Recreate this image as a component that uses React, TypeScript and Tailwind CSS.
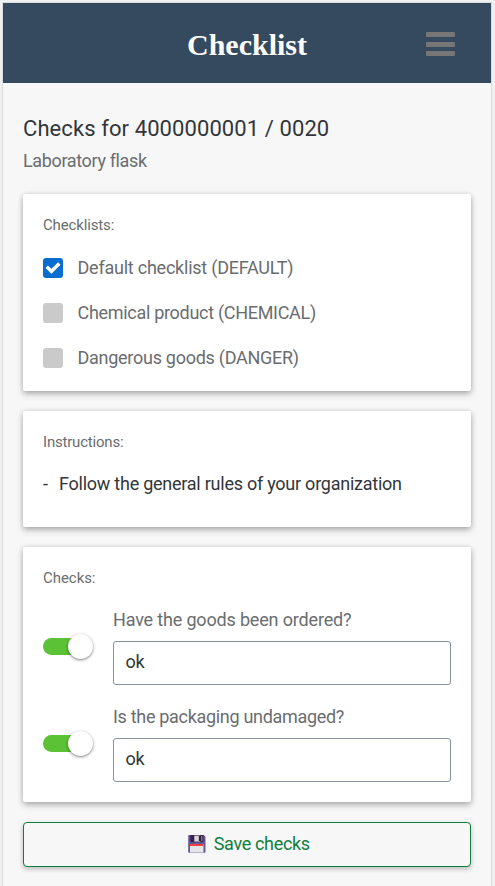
import { useState } from "react";

const card = "rounded-[2px] bg-white px-5 shadow-[0_3px_6px_rgba(0,0,0,0.28),0_0_5px_rgba(0,0,0,0.1)]";

function CheckRow({ label, tracking, initial = false }: { label: string; tracking: string; initial?: boolean }) {
  const [on, setOn] = useState(initial);
  return (
    <button type="button" role="checkbox" aria-checked={on} onClick={() => setOn(!on)} className="flex h-[45px] items-center">
      <span className={`flex size-5 shrink-0 items-center justify-center rounded-[3px] ${on ? "bg-[#0a6ed1]" : "bg-[#cacaca]"}`}>
        {on && (
          <svg width="20" height="20" viewBox="0 0 20 20" fill="none" stroke="white" strokeWidth="3.4">
            <path d="M3.7 8.8 8.4 13.3 16.3 5.5" />
          </svg>
        )}
      </span>
      <span className={`ml-[14.5px] whitespace-nowrap text-[18px] leading-6 text-[#6a6d70] ${tracking}`}>{label}</span>
    </button>
  );
}

function Toggle() {
  const [on, setOn] = useState(true);
  return (
    <button type="button" role="switch" aria-checked={on} onClick={() => setOn(!on)} className="relative mt-[26px] h-[25px] w-[50px] shrink-0">
      <span className={`absolute left-0 top-1 h-[17px] w-[46px] rounded-full ${on ? "bg-[#5bc236]" : "bg-[#cacaca]"}`} />
      <span className={`absolute top-0 size-[25px] rounded-full bg-white shadow-[0_1px_3px_rgba(0,0,0,0.5)] ${on ? "left-[25px]" : "left-0"}`} />
    </button>
  );
}

function Question({ label, tracking }: { label: string; tracking: string }) {
  return (
    <div className="flex h-[97px] gap-5">
      <Toggle />
      <label className="block flex-1">
        <span className={`mb-[9px] block whitespace-nowrap text-[18px] leading-6 text-[#6a6d70] ${tracking}`}>{label}</span>
        <input
          defaultValue="ok"
          className="block h-11 w-full rounded-[3px] border border-[#89919a] bg-white px-[11.5px] pb-1 text-[18px] tracking-[-0.3px] text-[#32363a] outline-none"
        />
      </label>
    </div>
  );
}

function Floppy() {
  return (
    <svg width="18" height="18" viewBox="0 0 18 18" className="shrink-0">
      <path d="M1 0h14.8L17.5 1.7V17a.8.8 0 0 1-.8.8H1a.8.8 0 0 1-.8-.8V.8A.8.8 0 0 1 1 0Z" fill="#65569b" />
      <path d="M2.3 0h13v6.3a1 1 0 0 1-1 1h-11a1 1 0 0 1-1-1Z" fill="#352248" />
      <path d="M6.3.6h6v6h-6Z" fill="#d9d6dc" />
      <path d="M10.8 1h2.6v5h-2.6Z" fill="#302039" />
      <path d="M13.4 1h.8v5h-.8Z" fill="#bdb6c5" />
      <path d="M2 9h13.5v8.5H2Z" fill="#e5e5e5" />
      <path d="M2 9h13.5v2H2Z" fill="#f8403a" />
    </svg>
  );
}

export default function App() {
  return (
    <div className="h-[886px] w-[495px] overflow-hidden bg-[#f0f0f0] pl-[2px] pt-[2px] font-['Roboto','Liberation_Sans',sans-serif]">
      <div className="h-[884px] w-[490px] border border-b-0 border-[#dcdcdc] bg-[#f7f7f7]">
        <header className="grid h-20 grid-cols-[1fr_auto_1fr] items-center bg-[#354a5f] pr-9">
          <span />
          <h1 className="ml-9 pt-[3px] font-['Liberation_Serif',serif] text-[30px] font-bold leading-8 text-white">Checklist</h1>
          <button type="button" aria-label="Menu" className="mt-[2px] flex w-[29px] flex-col gap-[4.5px] justify-self-end">
            <span className="h-[5px] rounded-[1px] bg-[#777]" />
            <span className="h-[5px] rounded-[1px] bg-[#777]" />
            <span className="h-[5px] rounded-[1px] bg-[#777]" />
          </button>
        </header>
        <main className="px-5 pt-8">
          <h2 className="whitespace-nowrap text-[22px] leading-7 tracking-[0.09px] text-[#32363a]">Checks for 4000000001 / 0020</h2>
          <p className="mt-[6px] whitespace-nowrap text-[18px] leading-6 tracking-[-0.36px] text-[#6a6d70]">Laboratory flask</p>
          <div className="mt-[21px] flex flex-col gap-5">
            <section className={`${card} h-[197px] pt-5`}>
              <h3 className="mb-[9px] text-[15px] leading-[22px] tracking-[-0.14px] text-[#6a6d70]">Checklists:</h3>
              <CheckRow label="Default checklist (DEFAULT)" tracking="tracking-[-0.23px]" initial />
              <CheckRow label="Chemical product (CHEMICAL)" tracking="tracking-[-0.3px]" />
              <CheckRow label="Dangerous goods (DANGER)" tracking="tracking-[-0.27px]" />
            </section>
            <section className={`${card} h-[116px] pt-5`}>
              <h3 className="text-[15px] leading-[22px] tracking-[-0.2px] text-[#6a6d70]">Instructions:</h3>
              <div className="mt-[19px] flex text-[18px] leading-6 text-[#32363a]">
                <span className="w-4">-</span>
                <span className="whitespace-nowrap tracking-[-0.245px]">Follow the general rules of your organization</span>
              </div>
            </section>
            <section className={`${card} h-[255px] pt-5`}>
              <h3 className="mb-[19px] text-[15px] leading-[22px] tracking-[-0.05px] text-[#6a6d70]">Checks:</h3>
              <Question label="Have the goods been ordered?" tracking="tracking-[-0.17px]" />
              <Question label="Is the packaging undamaged?" tracking="tracking-[-0.31px]" />
            </section>
            <button type="button" className="flex h-[45px] items-center justify-center gap-[7.5px] rounded-[4px] border border-[#107e3e] bg-[#f7f7f7] pb-[2px] pl-[4px] text-[18px] text-[#107e3e] shadow-[0_2px_5px_rgba(0,0,0,0.25)]">
              <Floppy />
              <span className="whitespace-nowrap tracking-[-0.33px]">Save checks</span>
            </button>
          </div>
        </main>
      </div>
    </div>
  );
}
